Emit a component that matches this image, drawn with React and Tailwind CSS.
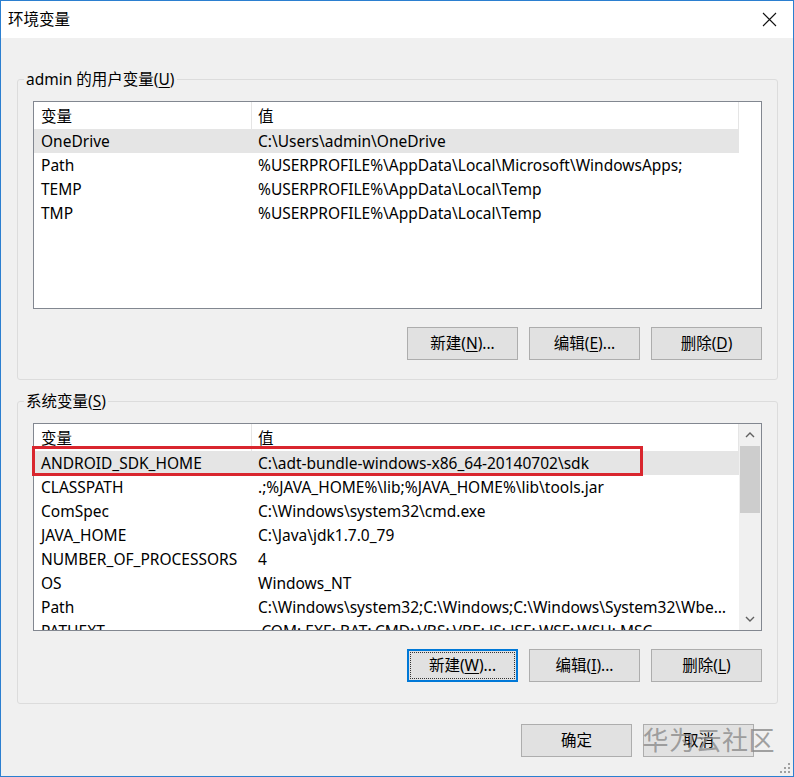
import React from "react";

const userVars = [
  { name: "OneDrive", value: "C:\\Users\\admin\\OneDrive", selected: true },
  { name: "Path", value: "%USERPROFILE%\\AppData\\Local\\Microsoft\\WindowsApps;" },
  { name: "TEMP", value: "%USERPROFILE%\\AppData\\Local\\Temp" },
  { name: "TMP", value: "%USERPROFILE%\\AppData\\Local\\Temp" },
];

const sysVars = [
  { name: "ANDROID_SDK_HOME", value: "C:\\adt-bundle-windows-x86_64-20140702\\sdk", selected: true },
  { name: "CLASSPATH", value: ".;%JAVA_HOME%\\lib;%JAVA_HOME%\\lib\\tools.jar" },
  { name: "ComSpec", value: "C:\\Windows\\system32\\cmd.exe" },
  { name: "JAVA_HOME", value: "C:\\Java\\jdk1.7.0_79" },
  { name: "NUMBER_OF_PROCESSORS", value: "4" },
  { name: "OS", value: "Windows_NT" },
  { name: "Path", value: "C:\\Windows\\system32;C:\\Windows;C:\\Windows\\System32\\Wbem;C:\\Windows\\System32\\WindowsPowerShell" },
  { name: "PATHEXT", value: ".COM;.EXE;.BAT;.CMD;.VBS;.VBE;.JS;.JSE;.WSF;.WSH;.MSC" },
];

function Row({ name, value, selected }) {
  return (
    <div className={`flex h-[24px] w-[705px] shrink-0 items-center pt-[2px] ${selected ? "bg-[#e5e5e5]" : ""}`}>
      <div className="w-[218px] shrink-0 pl-[7px] whitespace-nowrap">{name}</div>
      <div className="flex-1 overflow-hidden text-ellipsis whitespace-nowrap pl-[6px] pr-[6px]">{value}</div>
    </div>
  );
}

function Header() {
  return (
    <div className="flex h-[27px] w-[705px] shrink-0 items-center">
      <div className="flex h-full w-[218px] shrink-0 items-center border-r border-[#e5e5e5] pl-[7px] pt-[2px]">变量</div>
      <div className="flex h-full flex-1 items-center border-r border-[#e5e5e5] pl-[6px] pt-[2px]">值</div>
    </div>
  );
}

function Chevron({ up }) {
  return (
    <svg width="10" height="6" viewBox="0 0 10 6">
      <polyline
        points={up ? "1,5 5,1 9,5" : "1,1 5,5 9,1"}
        fill="none"
        stroke="#606060"
        strokeWidth="1.4"
      />
    </svg>
  );
}

function List({ rows, scroll }) {
  return (
    <div className="flex h-[208px] w-[729px] overflow-hidden border border-[#828790] bg-white">
      <div className="flex w-[705px] flex-col">
        <Header />
        {rows.map((r, i) => (
          <Row key={i} {...r} />
        ))}
      </div>
      {scroll && (
        <div className="ml-auto flex w-[22px] flex-col bg-[#f0f0f0]">
          <div className="flex h-[22px] items-center justify-center">
            <Chevron up />
          </div>
          <div className="mx-[1px] h-[67px] bg-[#cdcdcd]"></div>
          <div className="flex-1"></div>
          <div className="flex h-[22px] items-center justify-center">
            <Chevron />
          </div>
        </div>
      )}
    </div>
  );
}

function Btn({ children, focused }) {
  if (focused) {
    return (
      <button className="h-[33px] w-[111px] border-2 border-[#0078d7] bg-[#e1e1e1] p-[1px]">
        <span className="flex h-full items-center justify-center border border-dotted border-[#333]">{children}</span>
      </button>
    );
  }
  return (
    <button className="flex h-[33px] w-[111px] items-center justify-center border border-[#adadad] bg-[#e1e1e1]">
      {children}
    </button>
  );
}

function Key({ k }) {
  return <span className="underline underline-offset-2">{k}</span>;
}

function Group({ label, k, rows, scroll, buttons, pb }) {
  return (
    <fieldset className={`ml-[16px] w-[761px] rounded-[3px] border border-[#dcdcdc] px-[15px] pt-[12px] ${pb}`}>
      <legend className="-ml-[9px] h-[20px] px-[2px] leading-[20px]">
        {label}(<Key k={k} />)
      </legend>
      <div className="relative">
        <List rows={rows} scroll={scroll} />
        {scroll && (
          <div className="absolute left-[-1px] top-[23px] h-[30px] w-[611px] border-[3px] border-[#d9262e]"></div>
        )}
      </div>
      <div className="mt-[18px] flex justify-end gap-[11px]">{buttons}</div>
    </fieldset>
  );
}

export default function App() {
  return (
    <div className="flex h-[777px] w-[794px] flex-col border border-[#2b7fd0] bg-[#f0f0f0] font-['Noto_Sans','Noto_Sans_CJK_SC',sans-serif] text-[15.5px] text-black">
      <div className="flex h-[37px] shrink-0 items-center justify-between bg-white pl-[7px] pr-[16px]">
        <span>环境变量</span>
        <svg width="15" height="15" viewBox="0 0 15 15">
          <path d="M1 1L14 14M14 1L1 14" stroke="#111" strokeWidth="1.1" />
        </svg>
      </div>

      <div className="relative flex flex-1 flex-col">
        <div className="mt-[31px]">
          <Group
            label="admin 的用户变量"
            k="U"
            rows={userVars}
            pb="pb-[19px]"
            buttons={
              <>
                <Btn>新建(<Key k="N" />)...</Btn>
                <Btn>编辑(<Key k="E" />)...</Btn>
                <Btn>删除(<Key k="D" />)</Btn>
              </>
            }
          />
        </div>
        <div className="mt-[11px]">
          <Group
            label="系统变量"
            k="S"
            rows={sysVars}
            scroll
            pb="pb-[21px]"
            buttons={
              <>
                <Btn focused>新建(<Key k="W" />)...</Btn>
                <Btn>编辑(<Key k="I" />)...</Btn>
                <Btn>删除(<Key k="L" />)</Btn>
              </>
            }
          />
        </div>

        <div className="mt-[20px] flex justify-end gap-[11px] pr-[39px]">
          <Btn>确定</Btn>
          <Btn>取消</Btn>
        </div>

        <div className="pointer-events-none absolute bottom-[20px] right-[18px] text-[26px] leading-[32px] tracking-[0.5px] text-[#8a8a8a]/80">
          华为云社区
        </div>

        <svg className="absolute bottom-[2px] right-[2px]" width="12" height="12" viewBox="0 0 12 12">
          {[
            [9, 1], [9, 5], [5, 5], [9, 9], [5, 9], [1, 9],
          ].map(([x, y], i) => (
            <rect key={i} x={x} y={y} width="2" height="2" fill="#a0a0a0" />
          ))}
        </svg>
      </div>
    </div>
  );
}
